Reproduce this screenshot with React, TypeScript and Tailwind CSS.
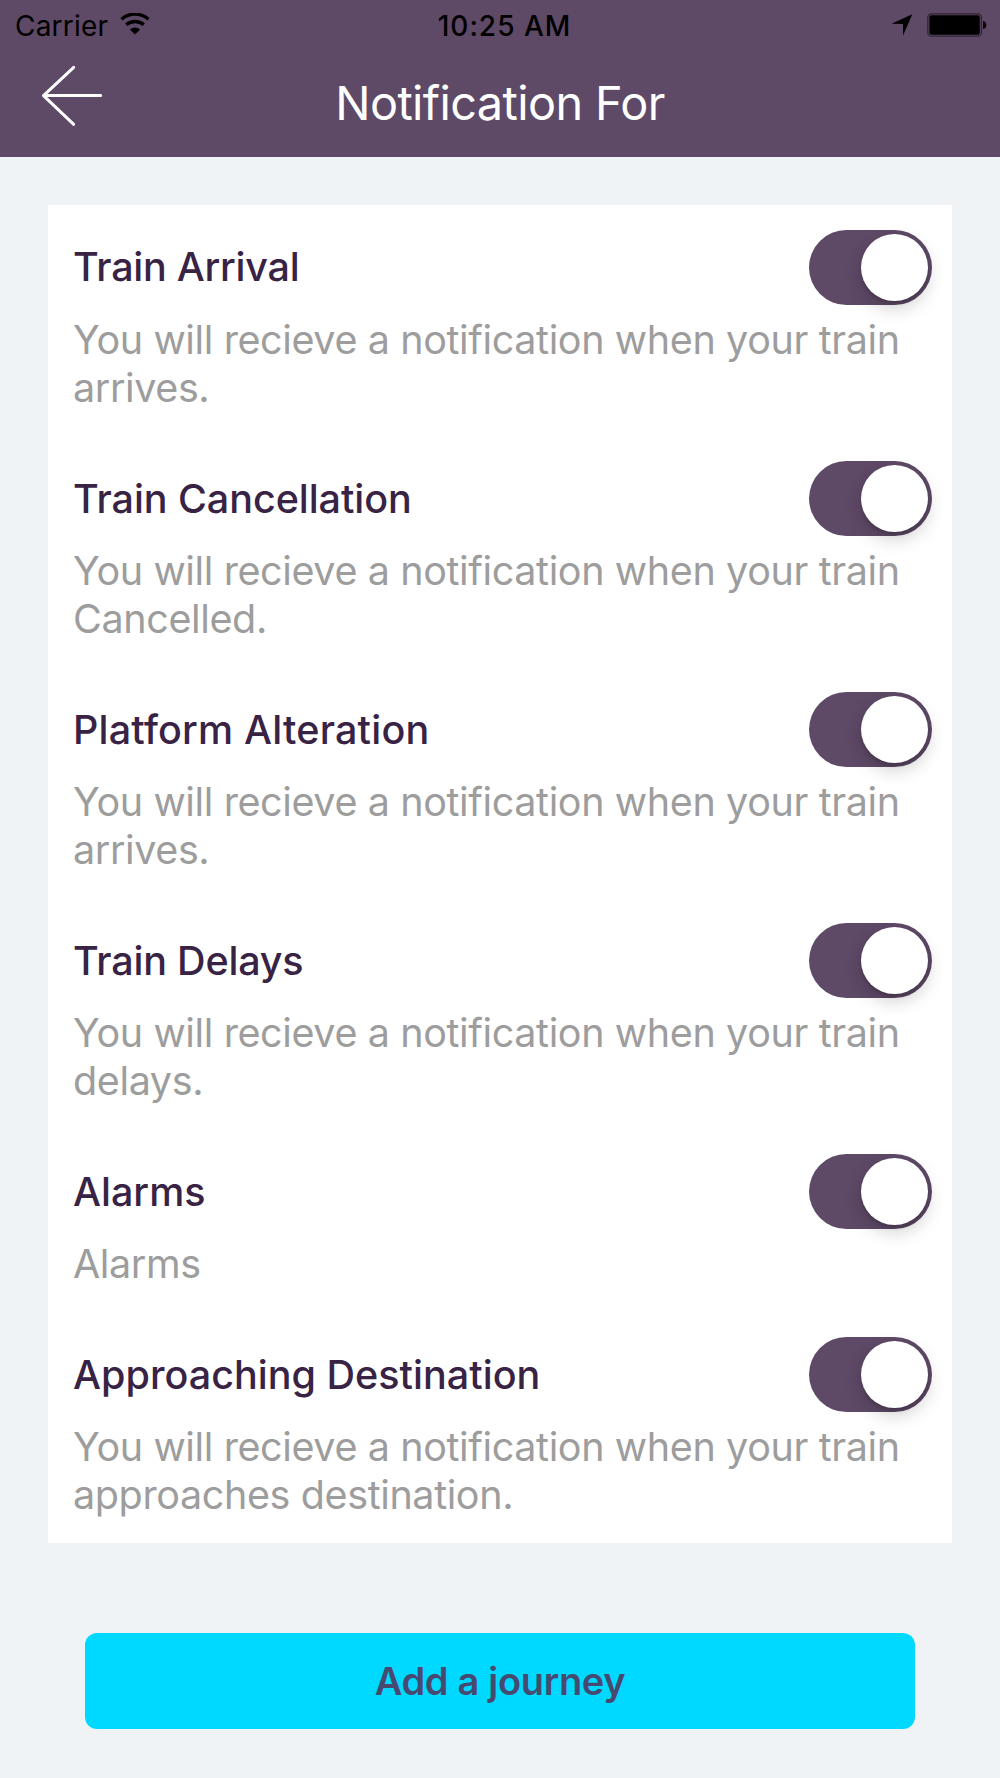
import { useState } from "react";

const initialSettings = [
  { title: "Train Arrival", tracking: "tracking-[-0.25px]", text: "You will recieve a notification when your train arrives.", on: true },
  { title: "Train Cancellation", tracking: "tracking-[-0.06px]", text: "You will recieve a notification when your train Cancelled.", on: true },
  { title: "Platform Alteration", tracking: "tracking-[0.2px]", text: "You will recieve a notification when your train arrives.", on: true },
  { title: "Train Delays", tracking: "tracking-[-0.2px]", text: "You will recieve a notification when your train delays.", on: true },
  { title: "Alarms", tracking: "tracking-normal", text: "Alarms", on: true },
  { title: "Approaching Destination", tracking: "tracking-[0.02px]", text: "You will recieve a notification when your train approaches destination.", on: true },
];

function WifiIcon() {
  return (
    <svg width="30" height="22" viewBox="0 0 30 22" fill="none" stroke="#000">
      <path d="M1.5 6.2a20.5 20.5 0 0 1 27 0" strokeWidth="3.4" />
      <path d="M6.2 11.8a13.3 13.3 0 0 1 17.6 0" strokeWidth="3.5" />
      <path d="M15 21.6l-5.1-5.2a7.6 7.6 0 0 1 10.2 0z" fill="#000" stroke="none" />
    </svg>
  );
}

function StatusBar() {
  return (
    <div className="grid grid-cols-3 items-center h-[50px] pl-[15px] pr-[13px] text-black leading-none">
      <div className="flex items-center gap-[12px]">
        <span className="pt-[2px] text-[28px] tracking-[0.2px]">Carrier</span>
        <span className="pb-[2px]">
          <WifiIcon />
        </span>
      </div>
      <span className="pl-[7px] pt-[2px] text-center text-[28px] font-medium tracking-[1px] whitespace-nowrap">10:25 AM</span>
      <div className="flex items-center justify-end gap-[14px]">
        <svg width="22" height="22" viewBox="0 0 22 22">
          <path d="M21.3 0.3L12 21.6V10L0.5 9.7z" fill="#000" />
        </svg>
        <svg width="60" height="24" viewBox="0 0 60 24">
          <rect x="0.8" y="0.8" width="53.6" height="22.4" rx="3.6" fill="none" stroke="#000" strokeOpacity="0.5" strokeWidth="1.3" />
          <rect x="2.4" y="2.3" width="50.4" height="19.4" rx="2" fill="#000" />
          <path d="M56 8c4.4 0.4 4.4 7.6 0 8z" fill="#000" />
        </svg>
      </div>
    </div>
  );
}

function Toggle({ on, label, onClick }: { on: boolean; label: string; onClick: () => void }) {
  return (
    <button
      role="switch"
      aria-checked={on}
      aria-label={label}
      onClick={onClick}
      className={`flex items-center h-[75px] w-[123px] px-[4px] rounded-full shrink-0 ${on ? "justify-end bg-[#5e4967]" : "justify-start bg-gray-200"}`}
    >
      <span className="size-[67px] rounded-full bg-white shadow-[0_7px_18px_rgba(0,0,0,0.19),0_3px_3px_rgba(0,0,0,0.12)]" />
    </button>
  );
}

export default function App() {
  const [settings, setSettings] = useState(initialSettings);

  const toggle = (index: number) =>
    setSettings(settings.map((s, i) => (i === index ? { ...s, on: !s.on } : s)));

  return (
    <div className="min-h-[1778px] bg-[#eff3f6] font-['Inter',sans-serif]">
      {/* Header */}
      <header className="h-[156.7px] bg-[#5e4967]">
        <StatusBar />
        <div className="grid grid-cols-[140px_1fr_140px] items-start">
          <button aria-label="Back" className="pl-[41px] pt-[15px]">
            <svg width="62" height="62" viewBox="0 0 62 62" fill="none" stroke="#fff" strokeWidth="3" strokeLinecap="round" strokeLinejoin="round">
              <path d="M32.7 2.3L2.5 30.6L32.7 59.3M2.5 30.6H59.7" />
            </svg>
          </button>
          <h1 className="pt-[25px] text-center text-[46.8px] leading-[56px] tracking-[-0.6px] text-white">Notification For</h1>
        </div>
      </header>

      {/* Settings card */}
      <main className="mx-[48.3px] mt-[48.3px] bg-white">
        {settings.map((s, i) => (
          <section key={s.title} className="pt-[24.7px] pb-[23.8px] pl-[24.7px] pr-[19.7px]">
            <div className="flex items-center justify-between">
              <h2 className={`pt-[0.6px] text-[39.5px] leading-[48px] font-medium text-[#392345] ${s.tracking}`}>{s.title}</h2>
              <Toggle on={s.on} label={s.title} onClick={() => toggle(i)} />
            </div>
            <p className="mt-[11px] text-[39.5px] leading-[48.3px] tracking-[-0.38px] text-[#9d9d9d]">{s.text}</p>
          </section>
        ))}
      </main>

      <button className="block mx-auto mt-[89.7px] h-[96.5px] w-[830px] rounded-[12px] bg-[#00d9ff] text-[38px] font-semibold tracking-[-0.3px] text-[#464a70]">
        Add a journey
      </button>
    </div>
  );
}
